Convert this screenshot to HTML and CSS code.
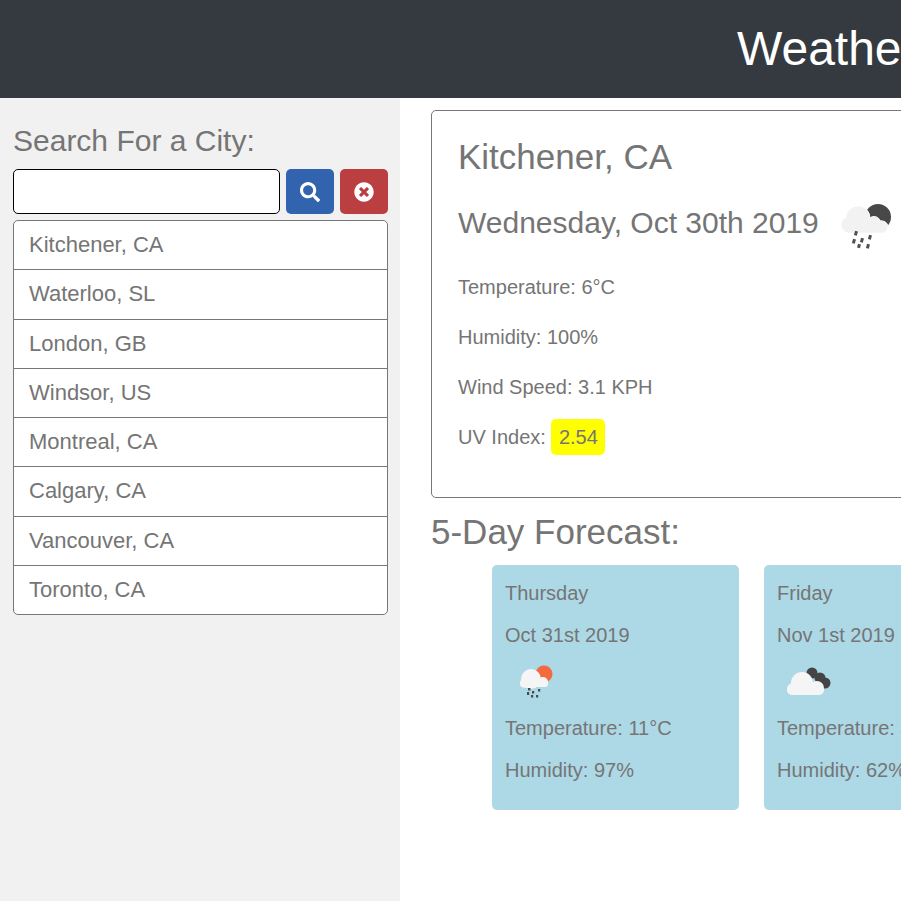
FILE: index.html
```html
<!DOCTYPE html>
<html lang="en">
<head>
<meta charset="utf-8">
<title>Weather Dashboard</title>
<link rel="stylesheet" href="styles.css">
</head>
<body>
<header class="top"><h1 class="brand">Weather Dashboard</h1></header>
<div class="page">
  <aside class="side">
    <h2 class="side-title">Search For a City:</h2>
    <div class="search">
      <input class="search-input" type="text" aria-label="City">
      <button class="btn btn-blue" aria-label="Search">
        <svg class="ico" viewBox="0 0 512 512"><path fill="#fff" d="M505 442.700L405.300 343c-4.500-4.500-10.600-7-17-7H372c27.600-35.300 44-79.700 44-128C416 93.100 322.900 0 208 0S0 93.100 0 208s93.100 208 208 208c48.300 0 92.700-16.400 128-44v16.300c0 6.400 2.500 12.500 7 17l99.700 99.700c9.400 9.400 24.600 9.400 33.900 0l28.300-28.300c9.400-9.400 9.400-24.600.1-34zM208 336c-70.700 0-128-57.200-128-128 0-70.700 57.200-128 128-128 70.700 0 128 57.200 128 128 0 70.700-57.200 128-128 128z"/></svg>
      </button>
      <button class="btn btn-red" aria-label="Clear">
        <svg class="ico" viewBox="0 0 512 512"><path fill="#fff" d="M256 8C119 8 8 119 8 256s111 248 248 248 248-111 248-248S393 8 256 8zm121.600 313.100c4.700 4.700 4.700 12.300 0 17L338 377.600c-4.700 4.700-12.300 4.700-17 0L256 312l-65.100 65.600c-4.700 4.700-12.300 4.700-17 0L134.400 338c-4.700-4.700-4.700-12.300 0-17l65.600-65-65.600-65.100c-4.700-4.700-4.700-12.300 0-17l39.600-39.600c4.700-4.700 12.300-4.700 17 0l65 65.700 65.100-65.600c4.700-4.700 12.300-4.700 17 0l39.600 39.600c4.700 4.700 4.700 12.300 0 17L312 256l65.600 65.100z"/></svg>
      </button>
    </div>
    <ul class="cities">
      <li class="city">Kitchener, CA</li>
      <li class="city">Waterloo, SL</li>
      <li class="city">London, GB</li>
      <li class="city">Windsor, US</li>
      <li class="city">Montreal, CA</li>
      <li class="city">Calgary, CA</li>
      <li class="city">Vancouver, CA</li>
      <li class="city">Toronto, CA</li>
    </ul>
  </aside>
  <main class="main">
    <section class="today">
      <h2 class="today-city">Kitchener, CA</h2>
      <div class="today-date">
        <h3 class="date-text">Wednesday, Oct 30th 2019</h3>
        <svg class="wx-big" viewBox="0 0 60 60">
          <circle cx="42" cy="24" r="13" fill="#484848"/>
          <g fill="#f2f2f2" stroke="#fff" stroke-width="1"><circle cx="22" cy="25" r="12"/><circle cx="13" cy="32" r="8"/><circle cx="38" cy="30" r="6.500"/><circle cx="46" cy="34" r="6"/><rect x="7" y="28" width="44" height="12" rx="6"/></g>
          <g fill="#f2f2f2"><circle cx="22" cy="25" r="11.500"/><circle cx="13" cy="32" r="7.500"/><circle cx="38" cy="30" r="6"/><circle cx="46" cy="34" r="5.500"/><rect x="8" y="28" width="42" height="11.500" rx="5.500"/></g>
          <g fill="#505050">
            <rect x="18.500" y="38" width="3" height="4.500" transform="rotate(15 20 40)"/>
            <rect x="16.500" y="46" width="3" height="4.500" transform="rotate(15 18 48)"/>
            <rect x="24.500" y="45" width="3" height="4.500" transform="rotate(15 26 47)"/>
            <rect x="32.500" y="42" width="3" height="4.500" transform="rotate(15 34 44)"/>
            <rect x="21.500" y="51" width="3" height="4" transform="rotate(15 23 53)"/>
            <rect x="30.500" y="51" width="3" height="4.500" transform="rotate(15 32 53)"/>
          </g>
        </svg>
      </div>
      <p class="stat">Temperature: 6°C</p>
      <p class="stat">Humidity: 100%</p>
      <p class="stat">Wind Speed: 3.1 KPH</p>
      <p class="stat">UV Index: <span class="uv">2.54</span></p>
    </section>
    <h2 class="fc-title">5-Day Forecast:</h2>
    <div class="fc-row">
      <article class="fc-card">
        <p class="fc-line">Thursday</p>
        <p class="fc-line">Oct 31st 2019</p>
        <svg class="wx-small" viewBox="0 0 50 50">
          <circle cx="39" cy="12" r="8.500" fill="#f26b3f"/>
          <g fill="#f5f5f5"><circle cx="26" cy="17" r="10"/><circle cx="20" cy="21" r="5"/><circle cx="38" cy="20" r="5"/><rect x="15" y="19" width="28" height="6" rx="3"/></g>
          <g fill="#4a4a4a">
            <rect x="23" y="26" width="2.500" height="2.500"/>
            <rect x="22" y="30" width="2.200" height="3"/>
            <rect x="27" y="29" width="2.200" height="2.500"/>
            <rect x="33" y="27" width="2.200" height="2.500"/>
            <rect x="26" y="33" width="2.200" height="2.500"/>
            <rect x="31" y="33" width="2.200" height="2.500"/>
          </g>
        </svg>
        <p class="fc-line">Temperature: 11°C</p>
        <p class="fc-line">Humidity: 97%</p>
      </article>
      <article class="fc-card">
        <p class="fc-line">Friday</p>
        <p class="fc-line">Nov 1st 2019</p>
        <svg class="wx-small" viewBox="0 0 50 50">
          <g fill="#444"><circle cx="35" cy="11" r="5.500"/><circle cx="43" cy="16" r="5.500"/><circle cx="48" cy="21" r="5.500"/></g>
          <g fill="#f5f5f5"><circle cx="25" cy="21" r="11"/><circle cx="16" cy="27" r="6"/><circle cx="40" cy="26" r="7"/><rect x="10" y="23" width="37" height="10" rx="5"/></g>
        </svg>
        <p class="fc-line">Temperature: 4°C</p>
        <p class="fc-line">Humidity: 62%</p>
      </article>
    </div>
  </main>
</div>
</body>
</html>
```
FILE: styles.css
```css
* { box-sizing: border-box; }
html, body { margin: 0; height: 100%; overflow: hidden; }
body { font-family: "Liberation Sans", Arial, sans-serif; color: #757575; background: #fff; }
.top { height: 98px; background: #343a40; padding-left: 737px; white-space: nowrap; overflow: hidden; }
.brand { margin: 0; font-size: 48px; font-weight: 400; line-height: 98px; color: #fff; }
.page { display: flex; height: 803px; }
.side { flex: 0 0 400px; background: #f1f1f1; padding: 25px 12px 0 13px; }
.side-title { margin: 0 0 10px; font-size: 30px; font-weight: 400; line-height: 36px; }
.search { display: flex; gap: 6px; height: 45px; }
.search-input { width: 267px; height: 45px; border: 1px solid #000; border-radius: 5px; background: #fff; padding: 0; }
.btn { width: 48px; height: 45px; border: 0; border-radius: 5px; display: flex; align-items: center; justify-content: center; padding: 0; }
.btn-blue { background: #3163ae; }
.btn-red { background: #bb3e41; }
.ico { width: 20px; height: 20px; }
.cities { list-style: none; margin: 6px 0 0; padding: 0; width: 375px; background: #fff; border: 1px solid #777; border-radius: 5px; }
.city { height: 49.25px; padding-left: 15px; font-size: 22px; line-height: 48px; border-top: 1px solid #777; }
.city:first-child { height: 48.45px; border-top: 0; }
.main { flex: 1 1 auto; padding: 12px 0 0 31px; min-width: 0; }
.today { width: 700px; height: 388px; border: 1px solid #777; border-radius: 5px; padding: 26px; }
.today-city { margin: 0; font-size: 35px; font-weight: 400; line-height: 40px; }
.today-date { display: flex; align-items: center; gap: 17px; margin: 13px 0 0; height: 66px; }
.date-text { margin: 0; font-size: 30px; font-weight: 400; }
.wx-big { width: 60px; height: 60px; flex: none; filter: blur(0.4px); }
.stat { margin: 0; font-size: 20px; height: 50px; line-height: 36px; }
.today-date + .stat { margin-top: 13px; }
.uv { display: inline-block; background: #ff0; border-radius: 5px; padding: 0 7.5px; height: 36px; }
.fc-title { margin: 15px 0 14px; font-size: 35px; font-weight: 400; line-height: 38px; }
.fc-row { display: flex; gap: 25px; padding-left: 61px; width: 900px; }
.fc-card { flex: 0 0 247px; height: 245px; background: #add8e6; border-radius: 5px; padding: 13px 13px; }
.fc-line { margin: 0 0 12px; font-size: 20px; line-height: 30px; white-space: nowrap; }
.wx-small { display: block; width: 50px; height: 50px; margin: 0 0 1px; overflow: visible; filter: blur(0.4px); }
```
